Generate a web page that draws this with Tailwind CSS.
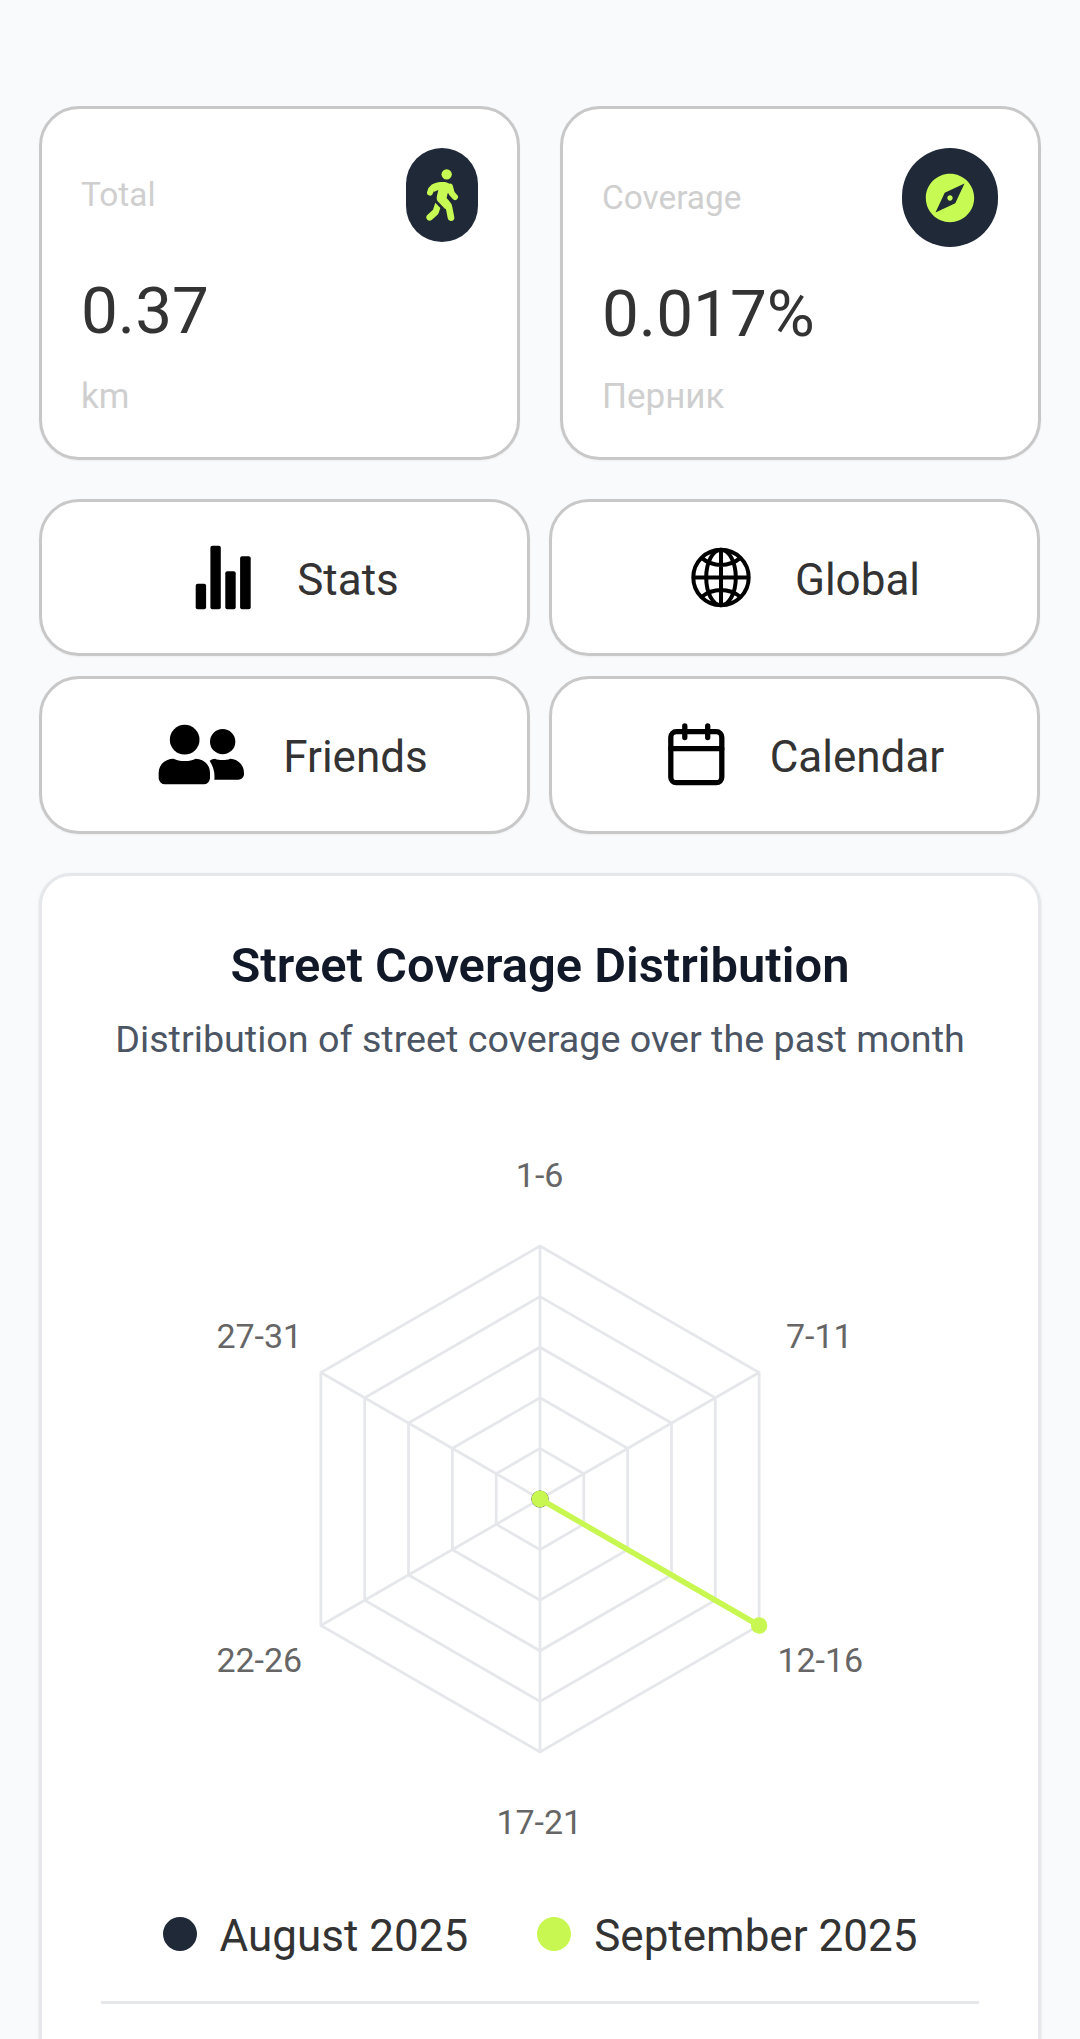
<!DOCTYPE html>
<html lang="en">
<head>
<meta charset="utf-8">
<title>Street coverage</title>
<script src="https://cdn.jsdelivr.net/npm/@tailwindcss/browser@4"></script>
</head>
<body class="overflow-hidden bg-[#f9fafc] font-['Roboto',sans-serif] text-[#333]">
<main class="flex h-[2039px] flex-col overflow-hidden px-[39px] pt-[106px]">

  <!-- Summary cards -->
  <section class="flex gap-10">
    <div class="h-[354px] w-[481px] rounded-[40px] border-3 border-[#c8c8c8] bg-white p-[39px] shadow-xs">
      <div class="flex items-center justify-between">
        <span class="text-[33.4px] leading-10 text-[#cfcfcf]">Total</span>
        <span class="flex h-[94px] w-[72px] items-center justify-center rounded-[36px] bg-[#1f2937]">
          <svg class="h-[54px] w-[34px]" viewBox="1212 230 102 162" fill="none" stroke="#c8fa54" stroke-linecap="round" stroke-linejoin="round">
            <circle cx="1277" cy="249" r="15.500" fill="#c8fa54" stroke="none"/>
            <path fill="#c8fa54" stroke="none" d="M1240 278c8-4 17-6 27-6 14 0 25 8 30 22l5 14-22-2-5 22 12 12-14 14-20-21c-6-6-7-12-5-20l4-17-14 6z"/>
            <path stroke-width="18" d="M1227 304c3-14 15-23 35-23M1287 286l5 20 10 11"/>
            <path stroke-width="20" d="M1260 317l17 18c4 4 6 8 7 13l6 31"/>
            <path fill="#c8fa54" stroke="none" d="M1243 334l15 16-5 15c-1 3-3 5-5 7l-16 14a10 10 0 0 1-14-14l18-17z"/>
          </svg>
        </span>
      </div>
      <div class="mt-[19px] text-[65.6px] leading-[100px]">0.37</div>
      <div class="mt-4 text-[35px] leading-10 text-[#cfcfcf]">km</div>
    </div>
    <div class="h-[354px] w-[481px] rounded-[40px] border-3 border-[#c8c8c8] bg-white p-[39px] pr-10 shadow-xs">
      <div class="flex items-center justify-between">
        <span class="text-[33.4px] leading-10 text-[#cfcfcf]">Coverage</span>
        <span class="flex h-[99px] w-24 items-center justify-center rounded-[48px] bg-[#1f2937]">
          <svg class="size-[58px]" viewBox="0 0 24 24" fill="#c8fa54"><path d="M12 10.900c-.61 0-1.100.49-1.100 1.100s.49 1.100 1.100 1.100c.61 0 1.100-.49 1.100-1.100s-.49-1.100-1.100-1.100zM12 2C6.480 2 2 6.480 2 12s4.480 10 10 10 10-4.480 10-10S17.520 2 12 2zm2.190 12.190L6 18l3.810-8.190L18 6l-3.810 8.190z"/></svg>
        </span>
      </div>
      <div class="mt-[17px] text-[65.6px] leading-[100px]">0.017%</div>
      <div class="mt-[13px] text-[35px] leading-10 text-[#cfcfcf]">Перник</div>
    </div>
  </section>

  <!-- Navigation buttons -->
  <nav class="mt-[39px] grid w-[1001px] grid-cols-2 gap-x-[19px] gap-y-5 text-[44px] leading-[52px]">
    <a class="flex h-[157px] items-center justify-center gap-[39px] rounded-[40px] border-3 border-[#c8c8c8] bg-white shadow-xs">
      <svg class="h-[88px] w-[88px]" viewBox="170 533.5 88 88"><rect x="195.7" y="583.3" width="10.4" height="25.4" rx="2"/><rect x="210.4" y="545.2" width="10.4" height="63.5" rx="2"/><rect x="225.3" y="570.7" width="10.4" height="38" rx="2"/><rect x="240.1" y="555.8" width="10.6" height="52.9" rx="2"/></svg>
      <span class="pt-1">Stats</span>
    </a>
    <a class="flex h-[157px] items-center justify-center gap-[39px] rounded-[40px] border-3 border-[#c8c8c8] bg-white shadow-xs">
      <svg class="h-[88px] w-[87px]" viewBox="669 533.5 87 88" fill="none" stroke="#000" stroke-width="4"><circle cx="721" cy="577" r="27.700"/><ellipse cx="721" cy="577" rx="14.8" ry="27.700"/><path d="M721 549v56M693 577h56M701.5 557.4c5.4 4.4 12.2 7 19.5 7s14.1-2.6 19.5-7M701.5 596.6c5.4-4.4 12.2-7 19.5-7s14.1 2.6 19.5 7"/></svg>
      <span class="pt-1">Global</span>
    </a>
    <a class="flex h-[158px] items-center justify-center gap-[39px] rounded-[40px] border-3 border-[#c8c8c8] bg-white shadow-xs">
      <svg class="h-[88px] w-[103px]" viewBox="363 693 309 264"><circle cx="494" cy="779" r="44.5"/><circle cx="608" cy="785" r="38"/><path d="M416 878c0-24 20-42 45-42 9 4 19 7 33 7s24-3 33-7c25 0 43 19 43 42v16a19 19 0 0 1-19 19H435a19 19 0 0 1-19-19zM569 842c5-4 10-6 16-6 7 3 14 4 23 4s15-1 23-4c22 0 41 19 41 42v4c0 10-8 17-17 17h-72c2-22-2-36-14-57z"/></svg>
      <span class="pt-1">Friends</span>
    </a>
    <a class="flex h-[158px] items-center justify-center gap-[39px] rounded-[40px] border-3 border-[#c8c8c8] bg-white shadow-xs">
      <svg class="h-[88px] w-[86px]" viewBox="644.7 711 86 88" fill="none" stroke="#000" stroke-width="5.3" stroke-linecap="round"><rect x="670.5" y="731.7" width="51" height="51" rx="5.5"/><path d="M670.5 748.7h51M684.5 726v11.5M707.4 726v11.5"/></svg>
      <span class="pt-1">Calendar</span>
    </a>
  </nav>

  <!-- Coverage chart -->
  <section class="mt-[39px] flex h-[1300px] shrink-0 flex-col rounded-[32px] border-3 border-[#e5e7eb] bg-white pt-[60px] shadow-sm">
    <h2 class="text-center text-[48.9px] leading-[60px] font-semibold text-[#111827]">Street Coverage Distribution</h2>
    <p class="mt-[15px] text-center text-[37.7px] leading-14 text-[#4b5563]">Distribution of street coverage over the past month</p>
    <svg class="h-[800px] w-full" viewBox="42 1067 996 800">
      <g fill="none" stroke="#e5e7eb" stroke-width="2.75">
        <path d="M540 1499V1246M540 1499L759.1 1372.5M540 1499L759.1 1625.5M540 1499V1752M540 1499L320.9 1625.5M540 1499L320.9 1372.5"/>
        <path d="M540 1448.4l43.8 25.3v50.6L540 1549.6l-43.8-25.3v-50.6z"/>
        <path d="M540 1397.8l87.6 50.6v101.2L540 1600.2l-87.6-50.6v-101.2z"/>
        <path d="M540 1347.2l131.5 75.9v151.8L540 1650.8l-131.5-75.9v-151.8z"/>
        <path d="M540 1296.6l175.3 101.2v202.4L540 1701.4l-175.3-101.2v-202.4z"/>
        <path d="M540 1246l219.1 126.5v253L540 1752l-219.1-126.5v-253z"/>
      </g>
      <circle cx="540" cy="1499" r="8.6" fill="#1f2937"/>
      <path d="M540 1499L759.1 1625.5" stroke="#c8f751" stroke-width="5.5"/>
      <circle cx="540" cy="1499" r="8.5" fill="#c8f751"/>
      <circle cx="759.1" cy="1625.5" r="8.25" fill="#c8f751"/>
      <g fill="#666" font-size="34">
        <text x="539.6" y="1186.7" text-anchor="middle">1-6</text>
        <text x="786" y="1348.4">7-11</text>
        <text x="777.4" y="1671.6">12-16</text>
        <text x="539.3" y="1833.5" text-anchor="middle">17-21</text>
        <text x="216.4" y="1671.6">22-26</text>
        <text x="216.4" y="1348.4">27-31</text>
      </g>
    </svg>
    <div class="mt-[43px] flex justify-center gap-[69px] text-[44px] leading-[52px]">
      <div class="flex items-center gap-[23px]"><span class="mb-1 size-[34px] rounded-full bg-[#1f2937]"></span>August 2025</div>
      <div class="flex items-center gap-[23px]"><span class="mb-1 size-[34px] rounded-full bg-[#c8f751]"></span>September 2025</div>
    </div>
    <div class="mx-[59px] mt-[39px] h-[3px] bg-[#e5e7eb]"></div>
  </section>
</main>
</body>
</html>
